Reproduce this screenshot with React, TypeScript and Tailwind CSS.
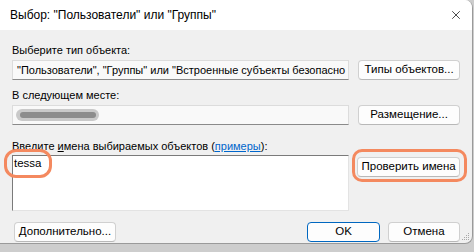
import { X } from 'lucide-react'

const font = { fontFamily: '"Liberation Sans", Arial, sans-serif' }

function Btn({ children, primary = false, className = '' }: { children: React.ReactNode; primary?: boolean; className?: string }) {
  return (
    <button
      className={`h-[20px] flex items-center justify-center whitespace-nowrap rounded-[4px] bg-[#fdfdfd] text-[11.5px] leading-none text-black ${
        primary ? 'border border-[#0067c0]' : 'border border-[#d0d0d0] border-b-[#b8b8b8]'
      } ${className}`}
    >
      {children}
    </button>
  )
}

export default function App() {
  return (
    <div className="w-[474px] h-[252px] bg-[#cdcdcd] overflow-hidden text-black" style={font}>
      <div className="relative w-[473px] h-[244px] bg-[#f0f0f0] rounded-r-[8px] border-r border-b border-[#9a9a9a] flex flex-col overflow-hidden">
        {/* title */}
        <div className="h-[30px] shrink-0 bg-white flex items-center justify-between pl-[10px] pr-[9px]">
          <span className="text-[12px] leading-none">Выбор: "Пользователи" или "Группы"</span>
          <X size={14} strokeWidth={1.2} />
        </div>

        <div className="flex flex-col px-[12px] text-[11px]">
          <div className="mt-[12px] h-[16px] leading-[16px]">Выберите тип объекта:</div>
          <div className="mt-[2px] flex items-center">
            <div className="w-[338px] h-[20px] bg-[#f9f9f9] border border-[#dcdcdc] border-b-[#8a8a8a] px-[4px] leading-[18px] whitespace-nowrap overflow-hidden">
              "Пользователи", "Группы" или "Встроенные субъекты безопасно
            </div>
            <Btn className="ml-[9px] w-[102px]">Типы объектов...</Btn>
          </div>

          <div className="mt-[7px] h-[16px] leading-[16px]">В следующем месте:</div>
          <div className="mt-[2px] flex items-center">
            <div className="w-[338px] h-[20px] bg-[#f9f9f9] border border-[#dcdcdc] border-b-[#8a8a8a] px-[3px] flex items-center">
              <div className="w-[83px] h-[12px] rounded-full bg-[#c9c9c9] flex items-center justify-center">
                <div className="w-[76px] h-[6px] rounded-full bg-[#8c8c8c]" />
              </div>
            </div>
            <Btn className="ml-[9px] w-[102px]">Размещение...</Btn>
          </div>

          <div className="mt-[13px] h-[16px] leading-[16px] whitespace-nowrap">
            Введите <span className="underline">и</span>мена выбираемых объектов (
            <span className="text-[#0066cc] underline">примеры</span>):
          </div>
          <div className="mt-[1px] flex items-start">
            <div className="w-[338px] h-[56px] bg-white border border-[#7a7a7a] border-r-[#e3e3e3] border-b-[#e3e3e3] px-[1px] text-[11.5px] leading-[14px]">
              tessa
            </div>
            <Btn className="ml-[8px] mt-[2px] w-[103px]">Проверить имена</Btn>
          </div>

          <div className="mt-[11px] flex items-center">
            <Btn className="ml-[2px] w-[102px]">Дополнительно...</Btn>
            <Btn primary className="ml-auto w-[73px]">OK</Btn>
            <Btn className="ml-[8px] w-[72px]">Отмена</Btn>
          </div>
        </div>

        {/* resize grip */}
        <svg className="absolute right-[2px] bottom-[2px]" width="8" height="8" viewBox="0 0 8 8" fill="#a8a8a8">
          <rect x="6" y="0" width="1" height="1" />
          <rect x="4" y="2" width="1" height="1" />
          <rect x="6" y="2" width="1" height="1" />
          <rect x="2" y="4" width="1" height="1" />
          <rect x="4" y="4" width="1" height="1" />
          <rect x="6" y="4" width="1" height="1" />
          <rect x="0" y="6" width="1" height="1" />
          <rect x="2" y="6" width="1" height="1" />
          <rect x="4" y="6" width="1" height="1" />
          <rect x="6" y="6" width="1" height="1" />
        </svg>

        {/* highlights */}
        <div className="absolute left-[4px] top-[149px] w-[48px] h-[29px] rounded-[12px] border-[3px] border-[#f4895f]" />
        <div className="absolute left-[352px] top-[149px] w-[115px] h-[33px] rounded-[10px] border-[3px] border-[#f4895f]" />
      </div>
    </div>
  )
}
